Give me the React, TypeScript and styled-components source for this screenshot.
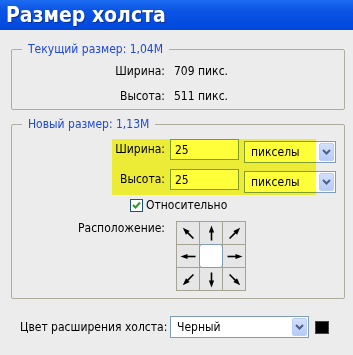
import styled, { createGlobalStyle } from "styled-components";

const Global = createGlobalStyle`
  html, body {
    margin: 0;
    padding: 0;
    background: #ececec;
  }
  body {
    font-family: "DejaVu Sans Condensed", "DejaVu Sans", Tahoma, sans-serif;
    font-size: 12px;
    color: #000;
  }
`;

const Window = styled.div`
  width: 353px;
  height: 355px;
  background: #ececec;
  overflow: hidden;
`;

const TitleBar = styled.div`
  height: 30px;
  padding-left: 6px;
  display: flex;
  align-items: center;
  background: linear-gradient(#1c6cf0 0%, #0b54e4 35%, #0048dc 100%);
  color: #fff;
  font-weight: bold;
  font-size: 21px;
  text-shadow: 1px 1px 0 #0a2f9c;
`;

const Body = styled.div`
  padding: 12px 8px 0 11px;
`;

const Group = styled.fieldset<{ $gap: number; $bottom: number }>`
  margin: 0 0 ${(p) => p.$gap}px 0;
  padding: 8px 0 ${(p) => p.$bottom}px 0;
  border: 1px solid #aeada0;
  border-radius: 2px;
  position: relative;
  min-width: 0;
`;

const Legend = styled.legend`
  margin-left: 10px;
  padding: 0 6px 0 6px;
  color: #2148d6;
  line-height: 14px;
`;

const InfoGrid = styled.div`
  display: grid;
  grid-template-columns: 153px auto;
  column-gap: 9px;
  row-gap: 11px;
  line-height: 14px;
`;

const Label = styled.div`
  text-align: right;
  white-space: nowrap;
  line-height: 14px;
`;

const FormGrid = styled.div`
  display: grid;
  grid-template-columns: 153px 69px 92px;
  column-gap: 5px;
  row-gap: 6px;
  align-items: start;
`;

const FormLabel = styled(Label)`
  line-height: 21px;
`;

const TextBox = styled.div`
  height: 21px;
  box-sizing: border-box;
  border: 1px solid #7f9db9;
  background: #fff;
  padding: 0 4px;
  display: flex;
  align-items: center;
`;

const Combo = styled.div<{ $w: number; $shift?: number }>`
  width: ${(p) => p.$w}px;
  height: 22px;
  box-sizing: border-box;
  border: 1px solid #7f9db9;
  background: #fff;
  display: flex;
  align-items: center;
  margin-top: ${(p) => p.$shift ?? 0}px;
  padding: 1px;
`;

const ComboText = styled.div`
  flex: 1;
  padding-left: 5px;
`;

const DropButton = styled.div`
  width: 15px;
  height: 18px;
  box-sizing: border-box;
  border: 1px solid #b9cdf5;
  border-radius: 2px;
  background: linear-gradient(#d3e0fd, #b6cbf8);
  display: flex;
  align-items: center;
  justify-content: center;
`;

const Highlight = styled.div`
  position: absolute;
  left: 100px;
  top: 8px;
  width: 204px;
  height: 56px;
  background: #ffff3a;
  mix-blend-mode: multiply;
  pointer-events: none;
`;

const CheckRow = styled.div`
  display: flex;
  align-items: center;
  gap: 3px;
  padding-left: 118px;
  margin-top: 5px;
  height: 14px;
`;

const CheckBox = styled.div`
  width: 13px;
  height: 13px;
  box-sizing: border-box;
  border: 1px solid #1c5180;
  background: #fff;
  display: flex;
  align-items: center;
  justify-content: center;
`;

const AnchorRow = styled.div`
  display: grid;
  grid-template-columns: 153px auto;
  column-gap: 11px;
  margin-top: 9px;
`;

const AnchorGrid = styled.div`
  display: grid;
  grid-template-columns: repeat(3, 22px);
  grid-template-rows: repeat(3, 22px);
  width: 70px;
  height: 70px;
  box-sizing: border-box;
  border: 1px solid #a5a493;
  background: #a5a493;
  gap: 1px;
`;

const Cell = styled.div<{ $center?: boolean }>`
  background: ${(p) => (p.$center ? "#fff" : "#e6e6e6")};
  display: flex;
  align-items: center;
  justify-content: center;
  ${(p) =>
    p.$center
      ? "border: 1px solid #7f9db9; border-radius: 3px; margin: -1px; box-sizing: border-box; width: 24px; height: 24px; position: relative;"
      : ""}
`;

const FooterRow = styled.div`
  display: flex;
  align-items: center;
  margin-top: 17px;
  padding-left: 9px;
`;

const FooterLabel = styled.div`
  width: 146px;
  text-align: right;
  margin-right: 4px;
  white-space: nowrap;
`;

const Swatch = styled.div`
  width: 14px;
  height: 13px;
  box-sizing: border-box;
  margin-left: 6px;
  background: #000;
  border: 1px solid #444;
`;

const Chevron = () => (
  <svg width="9" height="6" viewBox="0 0 9 6">
    <path d="M1 1 L4.5 4.5 L8 1" fill="none" stroke="#4d6185" strokeWidth="2" />
  </svg>
);

const Arrow = ({ angle }: { angle: number }) => (
  <svg width="21" height="21" viewBox="-10.5 -10.5 21 21">
    <g transform={`rotate(${angle})`}>
      <line x1="0" y1="7" x2="0" y2="-2" stroke="#000" strokeWidth="1.6" />
      <path d="M0 -8 L-2.6 -1 L2.6 -1 Z" fill="#000" />
    </g>
  </svg>
);

const cells = [-45, 0, 45, -90, null, 90, -135, 180, 135];

const UnitCombo = () => (
  <Combo $w={92} $shift={2}>
    <ComboText>пикселы</ComboText>
    <DropButton>
      <Chevron />
    </DropButton>
  </Combo>
);

export default function App() {
  return (
    <Window>
      <Global />
      <TitleBar>Размер холста</TitleBar>
      <Body>
        <Group $gap={7} $bottom={6}>
          <Legend>Текущий размер: 1,04М</Legend>
          <InfoGrid>
            <Label>Ширина:</Label>
            <div>709 пикс.</div>
            <Label>Высота:</Label>
            <div>511 пикс.</div>
          </InfoGrid>
        </Group>
        <Group $gap={0} $bottom={7}>
          <Legend>Новый размер: 1,13М</Legend>
          <FormGrid>
            <FormLabel>Ширина:</FormLabel>
            <TextBox>25</TextBox>
            <UnitCombo />
            <FormLabel>Высота:</FormLabel>
            <TextBox>25</TextBox>
            <UnitCombo />
          </FormGrid>
          <Highlight />
          <CheckRow>
            <CheckBox>
              <svg width="9" height="8" viewBox="0 0 9 8">
                <path d="M1 4 L3.5 6.5 L8 1.5" fill="none" stroke="#21a121" strokeWidth="2" />
              </svg>
            </CheckBox>
            Относительно
          </CheckRow>
          <AnchorRow>
            <Label>Расположение:</Label>
            <AnchorGrid>
              {cells.map((a, i) =>
                a === null ? (
                  <Cell key={i} $center />
                ) : (
                  <Cell key={i}>
                    <Arrow angle={a} />
                  </Cell>
                )
              )}
            </AnchorGrid>
          </AnchorRow>
        </Group>
        <FooterRow>
          <FooterLabel>Цвет расширения холста:</FooterLabel>
          <Combo $w={139}>
            <ComboText>Черный</ComboText>
            <DropButton>
              <Chevron />
            </DropButton>
          </Combo>
          <Swatch />
        </FooterRow>
      </Body>
    </Window>
  );
}
